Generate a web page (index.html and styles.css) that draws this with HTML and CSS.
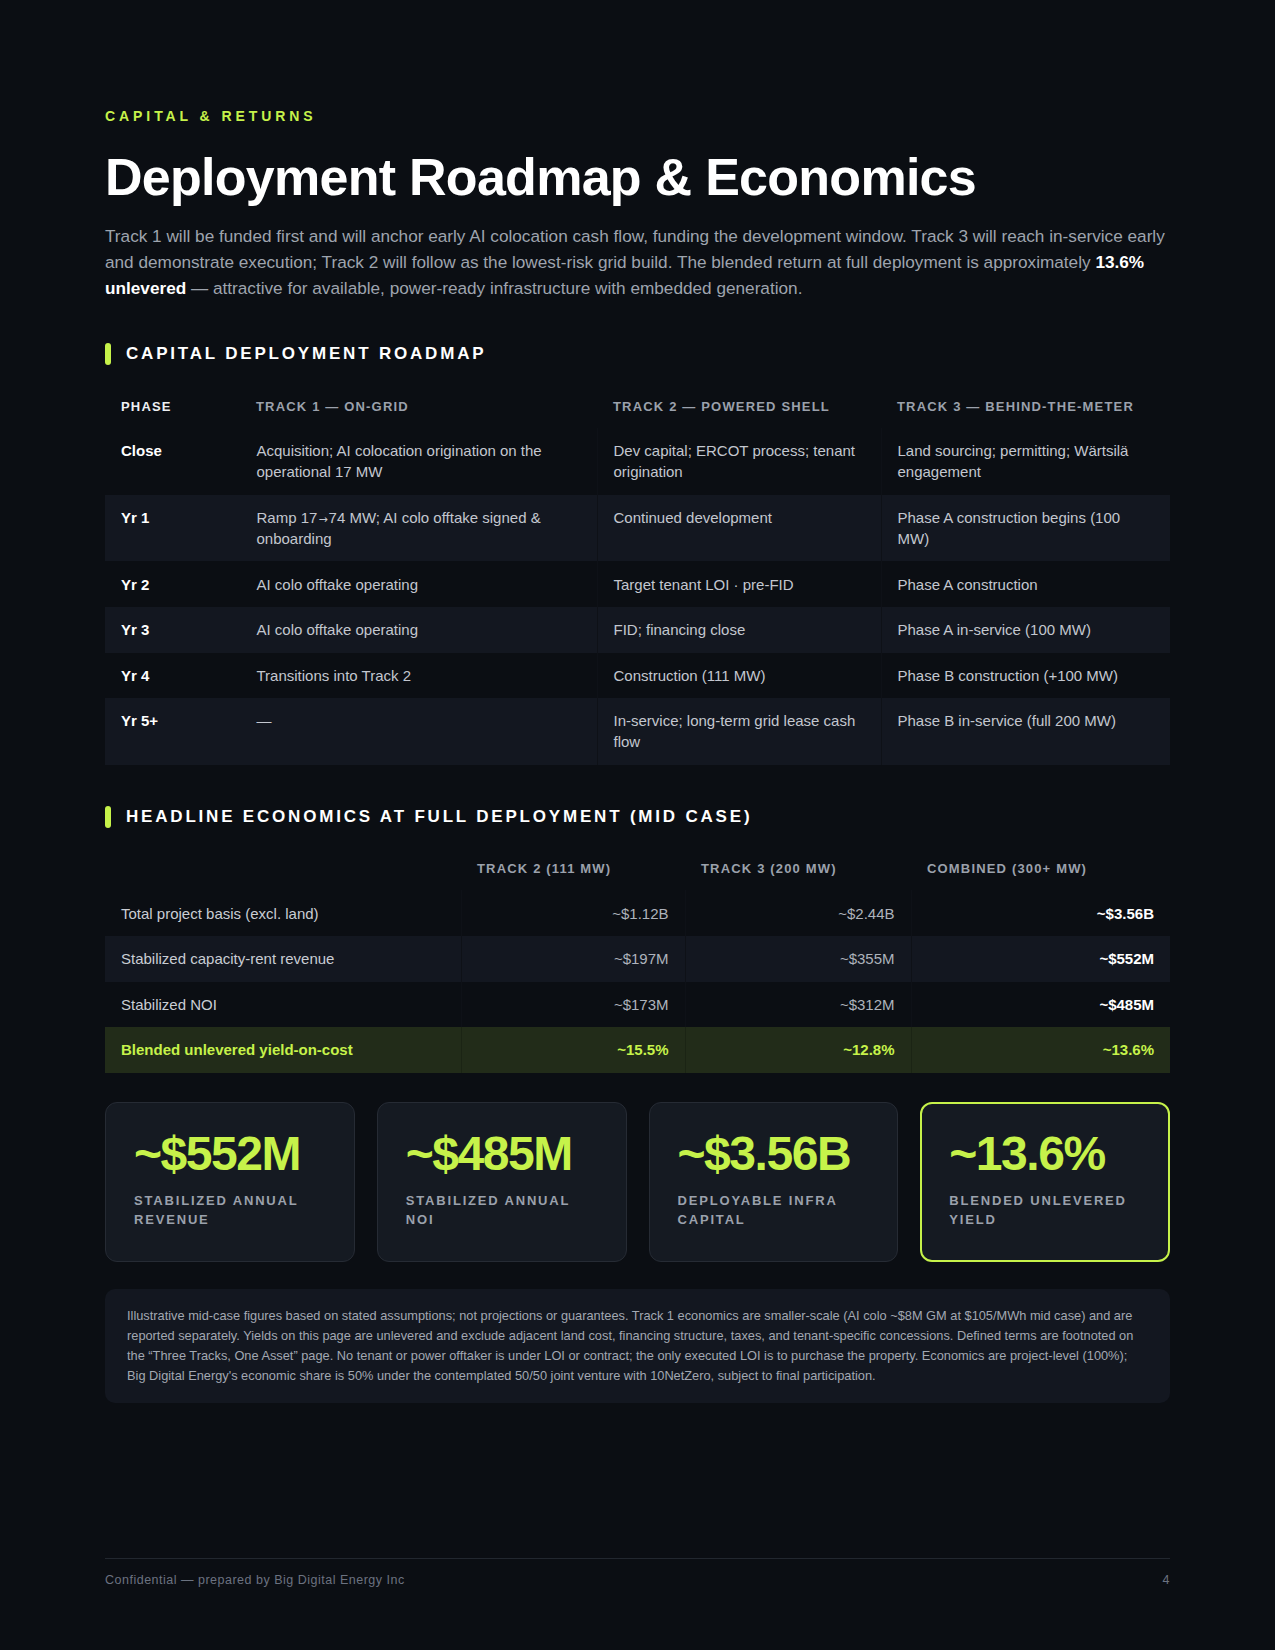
FILE: index.html
```html
<!DOCTYPE html>
<html lang="en">
<head>
<meta charset="utf-8">
<title>Deployment Roadmap &amp; Economics</title>
<link rel="stylesheet" href="styles.css">
</head>
<body>
<div class="page">
  <div class="eyebrow">CAPITAL &amp; RETURNS</div>
  <h1 class="title">Deployment Roadmap &amp; Economics</h1>
  <p class="lead">Track 1 will be funded first and will anchor early AI colocation cash flow, funding the development window. Track 3 will reach in-service early and demonstrate execution; Track 2 will follow as the lowest-risk grid build. The blended return at full deployment is approximately <strong>13.6% unlevered</strong> — attractive for available, power-ready infrastructure with embedded generation.</p>

  <h2 class="section-head"><span class="bar"></span><span>CAPITAL DEPLOYMENT ROADMAP</span></h2>
  <table class="grid roadmap">
    <colgroup>
      <col class="c-phase"><col class="c-t1"><col class="c-t2"><col class="c-t3">
    </colgroup>
    <thead>
      <tr><th class="th-main">PHASE</th><th>TRACK 1 — ON-GRID</th><th>TRACK 2 — POWERED SHELL</th><th>TRACK 3 — BEHIND-THE-METER</th></tr>
    </thead>
    <tbody>
      <tr><td class="phase">Close</td><td>Acquisition; AI colocation origination on the operational 17 MW</td><td>Dev capital; ERCOT process; tenant origination</td><td>Land sourcing; permitting; Wärtsilä engagement</td></tr>
      <tr><td class="phase">Yr 1</td><td>Ramp 17<span class="arrow">→</span>74 MW; AI colo offtake signed &amp; onboarding</td><td>Continued development</td><td>Phase A construction begins (100 MW)</td></tr>
      <tr><td class="phase">Yr 2</td><td>AI colo offtake operating</td><td>Target tenant LOI · pre-FID</td><td>Phase A construction</td></tr>
      <tr><td class="phase">Yr 3</td><td>AI colo offtake operating</td><td>FID; financing close</td><td>Phase A in-service (100 MW)</td></tr>
      <tr><td class="phase">Yr 4</td><td>Transitions into Track 2</td><td>Construction (111 MW)</td><td>Phase B construction (+100 MW)</td></tr>
      <tr><td class="phase">Yr 5+</td><td>—</td><td>In-service; long-term grid lease cash flow</td><td>Phase B in-service (full 200 MW)</td></tr>
    </tbody>
  </table>

  <h2 class="section-head"><span class="bar"></span><span>HEADLINE ECONOMICS AT FULL DEPLOYMENT (MID CASE)</span></h2>
  <table class="grid econ">
    <colgroup>
      <col class="e-label"><col class="e-t2"><col class="e-t3"><col class="e-comb">
    </colgroup>
    <thead>
      <tr><th></th><th>TRACK 2 (111 MW)</th><th>TRACK 3 (200 MW)</th><th>COMBINED (300+ MW)</th></tr>
    </thead>
    <tbody>
      <tr><td class="label">Total project basis (excl. land)</td><td class="num">~$1.12B</td><td class="num">~$2.44B</td><td class="num total">~$3.56B</td></tr>
      <tr><td class="label">Stabilized capacity-rent revenue</td><td class="num">~$197M</td><td class="num">~$355M</td><td class="num total">~$552M</td></tr>
      <tr><td class="label">Stabilized NOI</td><td class="num">~$173M</td><td class="num">~$312M</td><td class="num total">~$485M</td></tr>
      <tr class="hl"><td class="label">Blended unlevered yield-on-cost</td><td class="num">~15.5%</td><td class="num">~12.8%</td><td class="num">~13.6%</td></tr>
    </tbody>
  </table>

  <div class="cards">
    <div class="card">
      <div class="card-value">~$552M</div>
      <div class="card-label">STABILIZED ANNUAL REVENUE</div>
    </div>
    <div class="card">
      <div class="card-value">~$485M</div>
      <div class="card-label">STABILIZED ANNUAL NOI</div>
    </div>
    <div class="card">
      <div class="card-value">~$3.56B</div>
      <div class="card-label">DEPLOYABLE INFRA CAPITAL</div>
    </div>
    <div class="card card-accent">
      <div class="card-value">~13.6%</div>
      <div class="card-label">BLENDED UNLEVERED YIELD</div>
    </div>
  </div>

  <div class="note">Illustrative mid-case figures based on stated assumptions; not projections or guarantees. Track 1 economics are smaller-scale (AI colo ~$8M GM at $105/MWh mid case) and are reported separately. Yields on this page are unlevered and exclude adjacent land cost, financing structure, taxes, and tenant-specific concessions. Defined terms are footnoted on the “Three Tracks, One Asset” page. No tenant or power offtaker is under LOI or contract; the only executed LOI is to purchase the property. Economics are project-level (100%); Big Digital Energy's economic share is 50% under the contemplated 50/50 joint venture with 10NetZero, subject to final participation.</div>

  <footer class="footer">
    <span>Confidential — prepared by Big Digital Energy Inc</span>
    <span>4</span>
  </footer>
</div>
</body>
</html>
```

FILE: styles.css
```css
* { box-sizing: border-box; }

html, body {
  margin: 0;
  padding: 0;
  background: #0b0e13;
}

body {
  font-family: "Liberation Sans", Arial, sans-serif;
  color: #e8eaee;
}

.page {
  width: 1275px;
  min-height: 1650px;
  padding: 108px 105px 62px;
  display: flex;
  flex-direction: column;
}

.eyebrow {
  font-size: 14px;
  line-height: 1.2;
  font-weight: 700;
  letter-spacing: 0.28em;
  color: #c6f24a;
  margin: 0 0 24px;
}

.title {
  font-size: 52px;
  line-height: 1.1;
  font-weight: 700;
  letter-spacing: -0.014em;
  color: #ffffff;
  margin: 0 0 17px;
}

.lead {
  font-size: 17.2px;
  line-height: 26.2px;
  color: #9ea4ae;
  margin: 0;
}

.lead strong {
  color: #ffffff;
  font-weight: 700;
}

.section-head {
  display: flex;
  align-items: center;
  gap: 15px;
  height: 22px;
  margin: 41px 0 0;
  font-size: 17px;
  line-height: 22px;
  font-weight: 700;
  letter-spacing: 0.165em;
  color: #ffffff;
}

.section-head .bar {
  width: 6px;
  height: 22px;
  border-radius: 3px;
  background: #c6f24a;
  flex: none;
}

.grid {
  width: 100%;
  table-layout: fixed;
  border-collapse: collapse;
  margin-top: 20px;
}

.grid th {
  text-align: left;
  font-size: 13px;
  line-height: 1.2;
  font-weight: 700;
  letter-spacing: 0.09em;
  color: #9ba1ac;
  padding: 14px 16px;
}

.grid th.th-main {
  color: #eef0f3;
}

.grid td {
  font-size: 15px;
  line-height: 21px;
  padding: 12.3px 16px;
  color: #c3c7cf;
  vertical-align: top;
}

.grid td + td {
  border-left: 1px solid #0e1117;
}

.roadmap td.phase + td {
  border-left-color: transparent;
}

.grid tbody tr:nth-child(even) td {
  background: #131720;
}

.grid td.phase {
  font-weight: 700;
  color: #ffffff;
}

.arrow {
  display: inline-block;
  font-family: "DejaVu Sans", sans-serif;
  font-size: 11px;
  line-height: 14px;
  padding: 0 1px;
  color: #c3c7cf;
}

.c-phase { width: 135px; }
.c-t1 { width: 357px; }
.c-t2 { width: 284px; }
.c-t3 { width: 289px; }

.econ { margin-top: 19px; }

.e-label { width: 356px; }
.e-t2 { width: 224px; }
.e-t3 { width: 226px; }
.e-comb { width: 259px; }

.econ td {
  padding: 12.3px 16px;
}

.econ td.label {
  color: #c9cdd4;
}

.econ td.num {
  text-align: right;
  color: #aeb3bc;
}

.econ td.total {
  font-weight: 700;
  color: #ffffff;
}

.econ tbody tr.hl td {
  background: #222c19;
  color: #c6f24a;
  font-weight: 700;
}

.econ tbody tr.hl td + td {
  border-left-color: #1b2414;
}

.cards {
  display: grid;
  grid-template-columns: repeat(4, 1fr);
  gap: 22px;
  margin-top: 29px;
}

.card {
  background: #151a22;
  border: 1px solid #262b34;
  border-radius: 12px;
  padding: 27px 28px 32px;
}

.card-accent {
  border: 2px solid #c6f24a;
  padding: 26px 27px 31px;
}

.card-value {
  font-size: 48px;
  line-height: 1;
  font-weight: 700;
  letter-spacing: -0.03em;
  color: #c6f24a;
}

.card-label {
  margin-top: 13px;
  font-size: 13px;
  line-height: 19px;
  font-weight: 700;
  letter-spacing: 0.14em;
  color: #9ba1ac;
}

.note {
  margin-top: 27px;
  background: #131720;
  border-radius: 10px;
  padding: 17px 22px;
  font-size: 12.8px;
  line-height: 20px;
  color: #a2a8b2;
}

.footer {
  margin-top: auto;
  border-top: 1px solid #22272f;
  padding-top: 14px;
  display: flex;
  justify-content: space-between;
  font-size: 12.5px;
  line-height: 15px;
  letter-spacing: 0.04em;
  color: #6b7280;
}
```
